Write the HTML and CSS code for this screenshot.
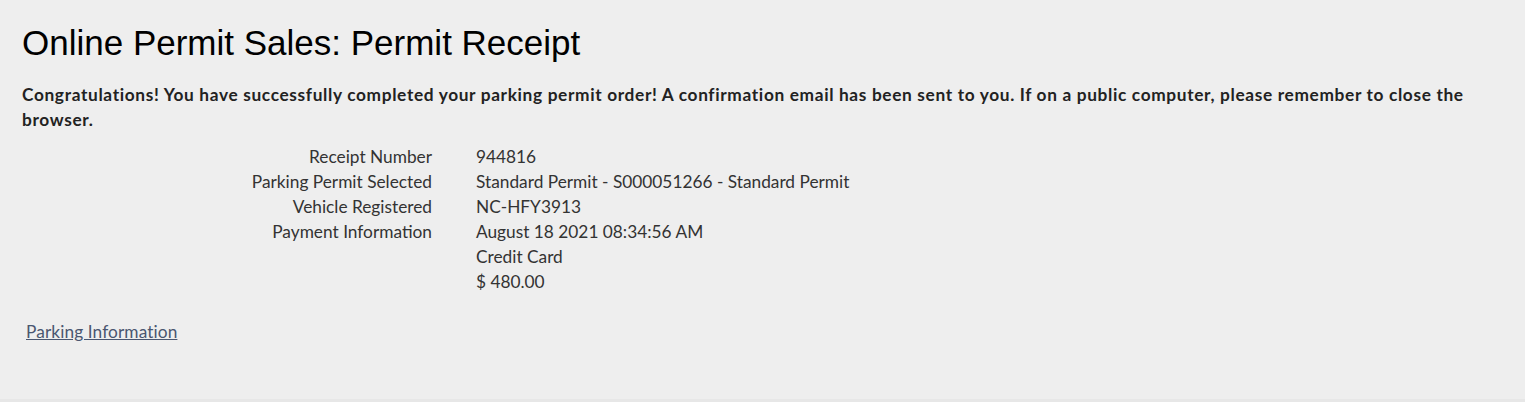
FILE: index.html
```html
<!DOCTYPE html>
<html>
<head>
<meta charset="utf-8">
<link rel="stylesheet" href="styles.css">
</head>
<body>
<div class="page">
  <h1 class="title">Online Permit Sales: Permit Receipt</h1>
  <p class="notice">Congratulations! You have successfully completed your parking permit order! A confirmation email has been sent to you. If on a public computer, please remember to close the browser.</p>
  <div class="receipt">
    <div class="label">Receipt Number</div>
    <div class="value">944816</div>
    <div class="label">Parking Permit Selected</div>
    <div class="value">Standard Permit - S000051266 - Standard Permit</div>
    <div class="label">Vehicle Registered</div>
    <div class="value">NC-HFY3913</div>
    <div class="label">Payment Information</div>
    <div class="value">August 18 2021 08:34:56 AM<br>Credit Card<br>$ 480.00</div>
  </div>
  <div class="links"><a href="#" class="link">Parking Information</a></div>
</div>
</body>
</html>
```
FILE: styles.css
```css
html, body {
  margin: 0;
  padding: 0;
  background: #eeeeee;
}
body {
  height: 402px;
  box-sizing: border-box;
  border-bottom: 3px solid #e7e7e7;
  font-family: Lato, "Noto Sans", sans-serif;
  font-size: 17.3px;
  color: #333333;
}
.page {
  padding: 23px 22px 0 22px;
}
.title {
  margin: 0;
  font-family: "Liberation Sans", Arial, sans-serif;
  font-weight: normal;
  font-size: 35px;
  line-height: 40px;
  color: #000;
}
.notice {
  margin: 19px 0 0 0;
  font-weight: bold;
  font-size: 17.3px;
  letter-spacing: 0.65px;
  line-height: 25px;
  color: #222;
}
.receipt {
  display: grid;
  grid-template-columns: 410px auto;
  column-gap: 44px;
  margin-top: 12px;
  line-height: 25px;
}
.label {
  text-align: right;
}
.links {
  margin-top: 27px;
  padding-left: 4px;
}
.link {
  color: #4a5670;
  text-decoration: underline;
  letter-spacing: 0.1px;
}
```
